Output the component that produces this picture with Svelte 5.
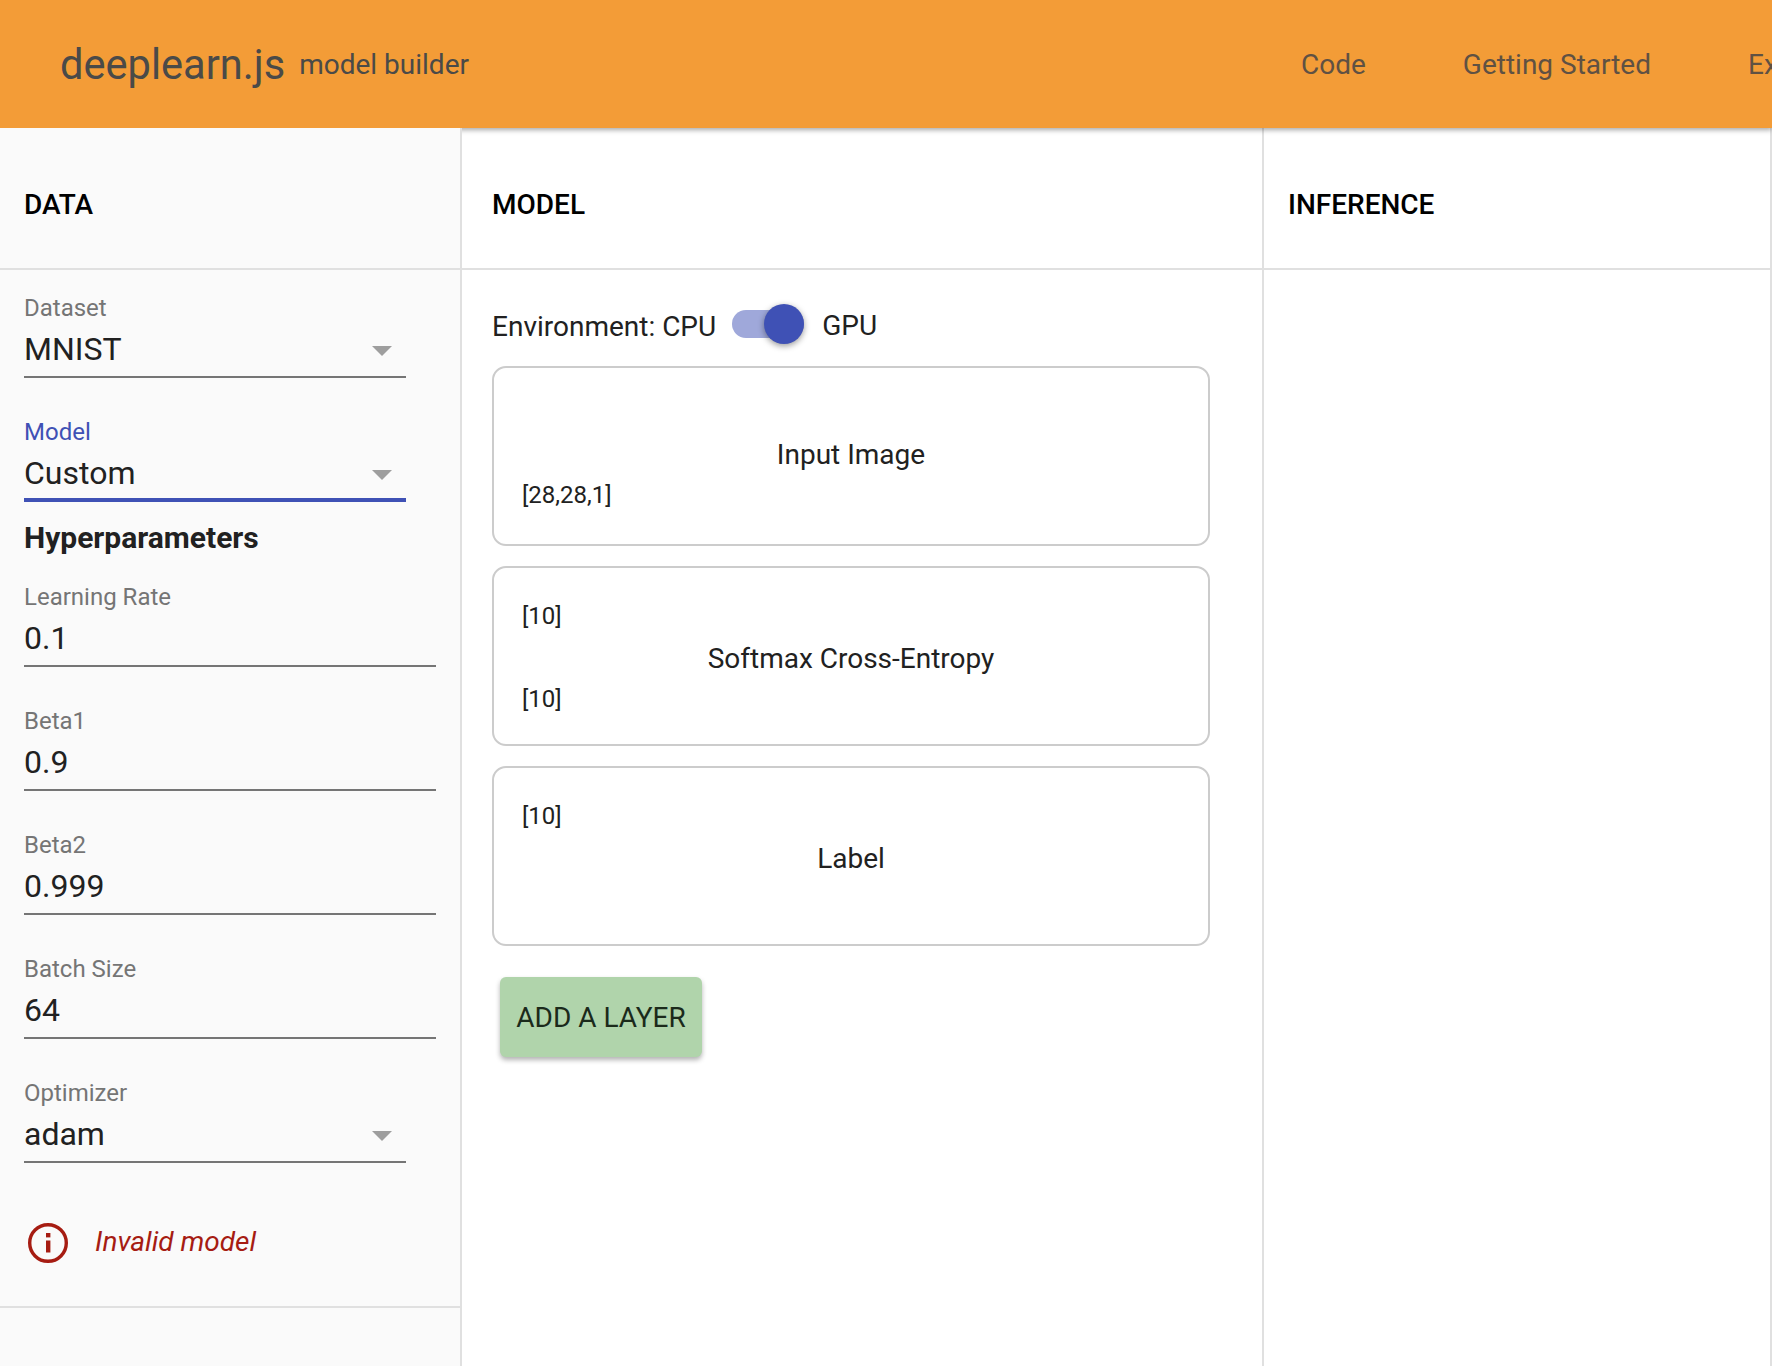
<script>
    const hyper = [
        { label: "Learning Rate", value: "0.1" },
        { label: "Beta1", value: "0.9" },
        { label: "Beta2", value: "0.999" },
        { label: "Batch Size", value: "64" }
    ]
    const layers = [
        { name: "Input Image", top: "", bottom: "[28,28,1]" },
        { name: "Softmax Cross-Entropy", top: "[10]", bottom: "[10]" },
        { name: "Label", top: "[10]", bottom: "" }
    ]
</script>

<div class="page">
    <header class="bar">
        <span class="title">deeplearn.js</span>
        <span class="sub">model builder</span>
        <nav class="links">
            <span>Code</span>
            <span>Getting Started</span>
            <span>Examples</span>
        </nav>
    </header>

    <main class="cols">
        <section class="col data">
            <h2 class="head">DATA</h2>
            <div class="body data-body">
                <div class="field select">
                    <div class="lab">Dataset</div>
                    <div class="val">MNIST<i class="caret"></i></div>
                </div>
                <div class="field select focus">
                    <div class="lab">Model</div>
                    <div class="val">Custom<i class="caret"></i></div>
                </div>
                <h3 class="hyper">Hyperparameters</h3>
                {#each hyper as h}
                    <div class="field">
                        <div class="lab">{h.label}</div>
                        <div class="val">{h.value}</div>
                    </div>
                {/each}
                <div class="field select">
                    <div class="lab">Optimizer</div>
                    <div class="val">adam<i class="caret"></i></div>
                </div>
                <div class="err">
                    <svg width="42" height="42" viewBox="0 0 42 42">
                        <circle cx="21" cy="21" r="18.3" fill="none" stroke="#a61c12" stroke-width="3.4" />
                        <rect x="19" y="11" width="4.4" height="4.4" fill="#a61c12" />
                        <rect x="19" y="18.5" width="4.4" height="12" fill="#a61c12" />
                    </svg>
                    <em>Invalid model</em>
                </div>
            </div>
        </section>

        <section class="col model">
            <h2 class="head">MODEL</h2>
            <div class="body model-body">
                <div class="env">
                    <span class="env-l">Environment: CPU</span>
                    <span class="switch"><i class="thumb"></i></span>
                    <span class="env-r">GPU</span>
                </div>
                {#each layers as l}
                    <div class="layer">
                        <div class="shape">{l.top}</div>
                        <div class="name">{l.name}</div>
                        <div class="shape">{l.bottom}</div>
                    </div>
                {/each}
                <button class="add">ADD A LAYER</button>
            </div>
        </section>

        <section class="col infer">
            <h2 class="head">INFERENCE</h2>
        </section>
    </main>
</div>

<style>
    :global(body) {
        overflow: hidden;
        background: #fff;
    }
    .page {
        width: 1772px;
        height: 1366px;
        overflow: hidden;
        display: flex;
        flex-direction: column;
        font-family: Roboto, "Liberation Sans", sans-serif;
        color: #212121;
    }
    .bar {
        height: 128px;
        flex: none;
        background: #f39c37;
        display: flex;
        align-items: center;
        padding-left: 60px;
        box-shadow: 0 2px 5px rgba(0, 0, 0, 0.35);
        position: relative;
        z-index: 1;
        white-space: nowrap;
    }
    .title {
        font-size: 41.6px;
        color: #4a4a48;
        margin-right: 14px;
    }
    .sub {
        font-size: 28px;
        color: #4a4a48;
    }
    .links {
        position: absolute;
        left: 1301px;
        display: flex;
        gap: 97px;
        font-size: 28px;
        color: #5f5143;
    }
    .cols {
        flex: 1;
        display: flex;
        min-height: 0;
    }
    .col {
        border-right: 2px solid #e0e0e0;
        box-sizing: border-box;
    }
    .data {
        width: 462px;
        background: #fafafa;
        position: relative;
        z-index: 2;
    }
    .model {
        width: 802px;
    }
    .infer {
        flex: 1;
    }
    .head {
        margin: 0;
        height: 142px;
        box-sizing: border-box;
        border-bottom: 2px solid #e0e0e0;
        display: flex;
        align-items: center;
        font-size: 28px;
        font-weight: 500;
        color: #000;
        padding: 13px 0 0 30px;
    }
    .data .head {
        padding-left: 24px;
    }
    .infer .head {
        padding-left: 24px;
    }
    .data-body {
        height: 1038px;
        box-sizing: border-box;
        border-bottom: 2px solid #e0e0e0;
        padding: 22px 0 0 24px;
    }
    .field {
        height: 124px;
        width: 412px;
    }
    .select {
        width: 382px;
    }
    .lab {
        font-size: 24px;
        line-height: 32px;
        color: #757575;
    }
    .val {
        position: relative;
        font-size: 32px;
        line-height: 50px;
        height: 52px;
        border-bottom: 2px solid #757575;
        color: #212121;
    }
    .caret {
        position: absolute;
        right: 14px;
        top: 22px;
        width: 0;
        height: 0;
        border-left: 10px solid transparent;
        border-right: 10px solid transparent;
        border-top: 10px solid #9e9e9e;
    }
    .focus {
        height: 102px;
    }
    .focus .lab {
        color: #3f51b5;
    }
    .focus .val {
        height: 50px;
        border-bottom: 4px solid #3f51b5;
    }
    .hyper {
        margin: 0 0 23px;
        font-size: 30px;
        line-height: 40px;
        font-weight: 700;
        color: #212121;
    }
    .err {
        display: flex;
        align-items: center;
        gap: 26px;
        margin: 21px 0 0 3px;
        color: #a61c12;
        font-size: 28px;
    }
    .err em {
        margin-bottom: 4px;
    }
    .model-body {
        padding: 30px 0 0 30px;
    }
    .env {
        display: flex;
        align-items: center;
        height: 48px;
        margin-bottom: 18px;
        font-size: 28px;
    }
    .env-l {
        margin-right: 16px;
        padding-top: 4px;
    }
    .env-r {
        padding-top: 2px;
    }
    .switch {
        width: 72px;
        height: 28px;
        border-radius: 14px;
        background: #9fa8da;
        position: relative;
        margin-right: 18px;
        flex: none;
    }
    .thumb {
        position: absolute;
        right: 0;
        top: -6px;
        width: 40px;
        height: 40px;
        border-radius: 50%;
        background: #3f51b5;
        box-shadow: 0 2px 6px rgba(0, 0, 0, 0.4);
    }
    .layer {
        width: 718px;
        height: 180px;
        box-sizing: border-box;
        border: 2px solid #ccc;
        border-radius: 14px;
        margin-bottom: 20px;
        padding: 28px 28px 29px;
        display: flex;
        flex-direction: column;
        justify-content: space-between;
        font-size: 28px;
    }
    .shape {
        font-size: 24px;
        height: 40px;
        line-height: 40px;
    }
    .name {
        text-align: center;
        line-height: 40px;
        padding-top: 3px;
    }
    .add {
        margin: 31px 0 0 8px;
        width: 202px;
        height: 80px;
        display: block;
        border: 0;
        border-radius: 6px;
        background: #b0d4ab;
        color: #1b2a1b;
        font-family: inherit;
        font-size: 28px;
        padding: 0;
        box-shadow: 0 3px 5px rgba(0, 0, 0, 0.3);
    }
</style>
